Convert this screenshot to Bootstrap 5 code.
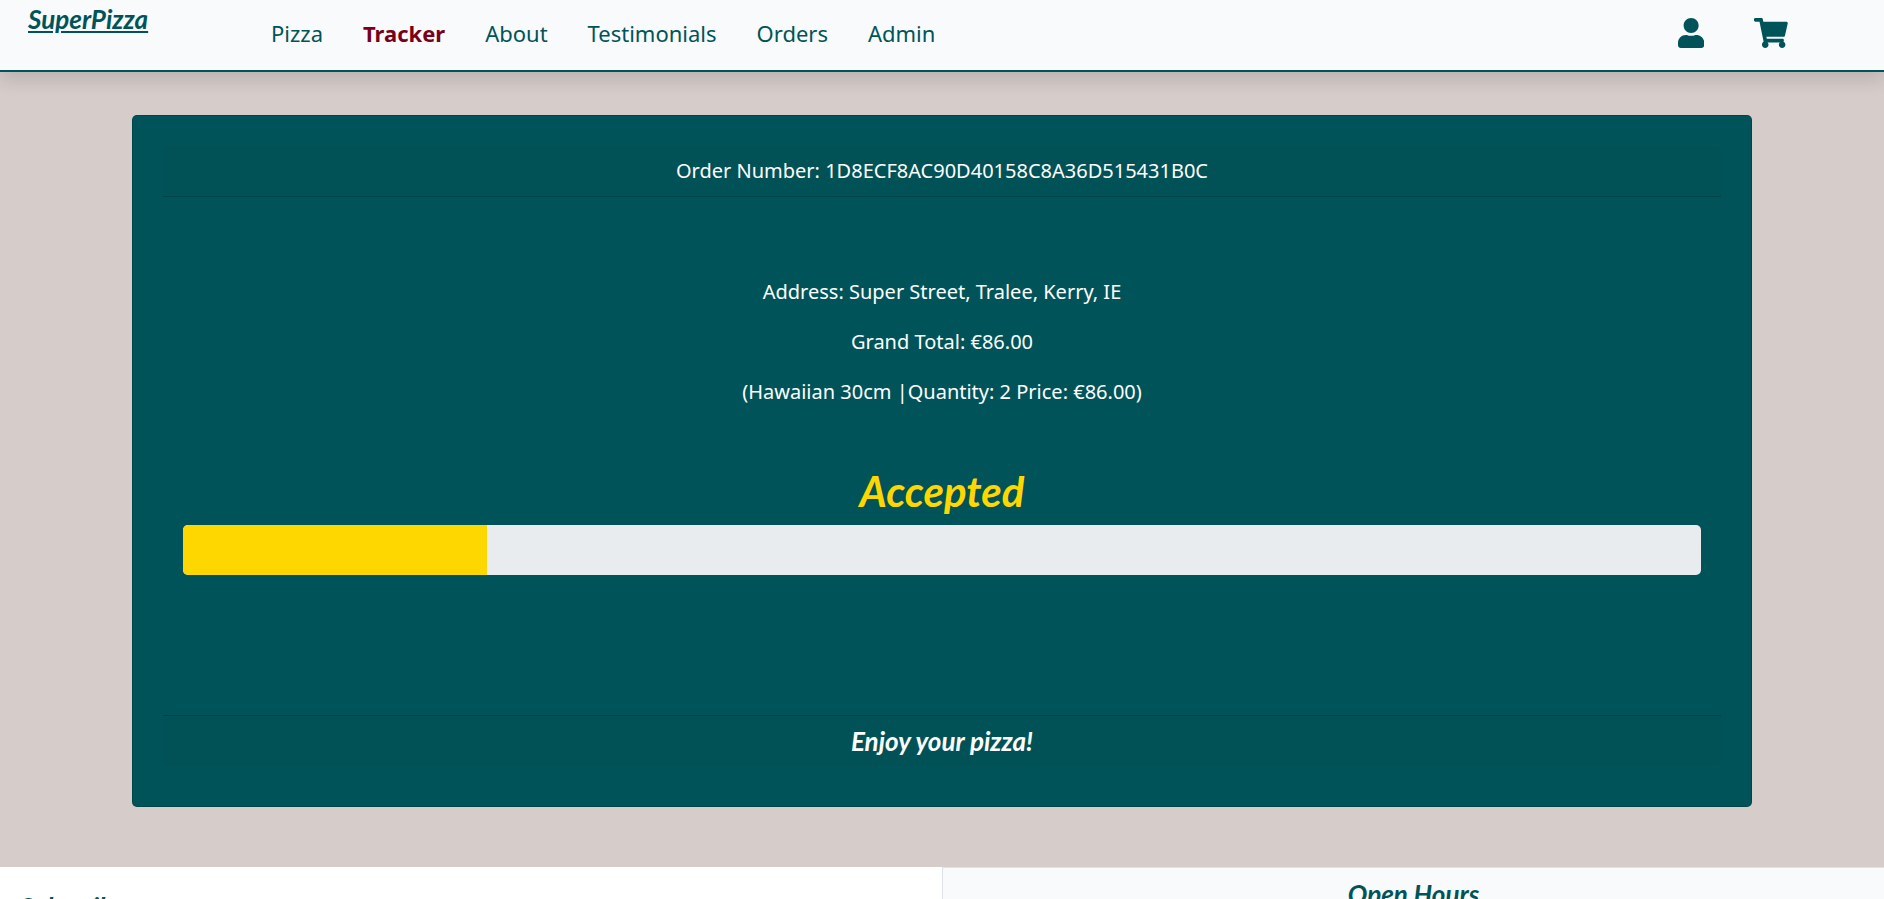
<!DOCTYPE html>
<html lang="en">
<head>
<meta charset="utf-8">
<meta name="viewport" content="width=device-width, initial-scale=1">
<title>SuperPizza - Tracker</title>
<link href="https://cdn.jsdelivr.net/npm/bootstrap@5.3.0/dist/css/bootstrap.min.css" rel="stylesheet">
<style>
  :root { --teal: #005459; --gold: #ffd700; --wine: #7a0019; }
  body { background: #d6ccca; color: var(--teal); font-family: "Noto Sans", sans-serif; font-size: 20px; }
  .display-font { font-family: Lato, sans-serif; font-style: italic; font-weight: 700; }
  .site-nav { background: #f8fafc; border-bottom: 2px solid var(--teal); height: 72px; padding: 0 96px 0 28px; }
  .site-nav a { color: var(--teal); }
  .brand { font-size: 26px; line-height: 38px; width: 243px; }
  .menu { gap: 40px; font-size: 22px; line-height: 32px; }
  .menu a { text-decoration: none; }
  .menu a.active { color: var(--wine); font-weight: 700; }
  .tools { gap: 50px; }
  .tools svg { display: block; height: 30px; fill: currentColor; }
  .tracker { background: var(--teal); width: 86%; margin: 43px auto 60px; padding: 30px 30px 40px; border-radius: 5px; }
  .tracker .card-header, .tracker .card-footer { padding: 10px 20px; line-height: 30px; }
  .tracker .card-body { padding: 80px 20px 140px; }
  .details p { line-height: 30px; margin-bottom: 20px; }
  .status { color: var(--gold); font-size: 42px; line-height: 48px; margin: 60px 0 10px; }
  .tracker .progress { height: 50px; border-radius: 5px; background: #e9ecef; }
  .tracker .progress-bar { background: var(--gold); }
  .closing { font-size: 26px; }
  .foot-title { font-size: 26px; line-height: 32px; margin: 0; }
  .foot-left { background: #fff; padding: 24px 20px; }
  .foot-right { background: #f8fafc; padding: 10px 20px 24px; }
</style>
</head>
<body>
<nav class="site-nav d-flex shadow position-relative">
  <a class="brand display-font align-self-start" href="#">SuperPizza</a>
  <div class="menu d-flex align-items-center pb-1">
    <a href="#">Pizza</a>
    <a href="#" class="active" aria-current="page">Tracker</a>
    <a href="#">About</a>
    <a href="#">Testimonials</a>
    <a href="#">Orders</a>
    <a href="#">Admin</a>
  </div>
  <div class="tools d-flex align-items-center ms-auto pb-1">
    <a href="#" aria-label="Account"><svg viewBox="0 0 448 512"><path d="M224 256c70.7 0 128-57.3 128-128S294.7 0 224 0 96 57.3 96 128s57.3 128 128 128zm89.6 32h-16.7c-22.2 10.2-46.9 16-72.9 16s-50.6-5.8-72.9-16h-16.7C60.2 288 0 348.2 0 422.4V464c0 26.5 21.5 48 48 48h352c26.5 0 48-21.5 48-48v-41.6c0-74.2-60.2-134.4-134.4-134.4z"/></svg></a>
    <a href="#" aria-label="Cart"><svg viewBox="0 0 576 512"><path d="M528.12 301.319l47.273-208C578.806 78.301 567.391 64 551.99 64H159.208l-9.166-44.81C147.758 8.021 137.93 0 126.529 0H24C10.745 0 0 10.745 0 24v16c0 13.255 10.745 24 24 24h69.883l70.248 343.435C147.325 417.1 136 435.222 136 456c0 30.928 25.072 56 56 56s56-25.072 56-56c0-15.674-6.447-29.835-16.824-40h209.647C430.447 426.165 424 440.326 424 456c0 30.928 25.072 56 56 56s56-25.072 56-56c0-22.172-12.888-41.332-31.579-50.405l5.517-24.276c3.413-15.018-8.002-29.319-23.403-29.319H218.117l-6.545-32h293.145c11.206 0 20.92-7.754 23.403-18.681z"/></svg></a>
  </div>
</nav>
<main class="card tracker text-center text-white">
  <div class="card-header">Order Number: 1D8ECF8AC90D40158C8A36D515431B0C</div>
  <div class="card-body">
    <div class="details">
      <p>Address: Super Street, Tralee, Kerry, IE</p>
      <p>Grand Total: €86.00</p>
      <p>(Hawaiian 30cm |Quantity: 2 Price: €86.00)</p>
    </div>
    <h1 class="status display-font">Accepted</h1>
    <div class="progress" role="progressbar" aria-label="Order progress" aria-valuenow="20" aria-valuemin="0" aria-valuemax="100">
      <div class="progress-bar" style="width: 20%"></div>
    </div>
  </div>
  <div class="card-footer closing display-font">Enjoy your pizza!</div>
</main>
<footer class="row g-0">
  <section class="col-6 foot-left"><h2 class="foot-title display-font">Subscribe</h2></section>
  <section class="col-6 foot-right border-start border-top text-center"><h2 class="foot-title display-font">Open Hours</h2></section>
</footer>
<script src="https://cdn.jsdelivr.net/npm/bootstrap@5.3.0/dist/js/bootstrap.bundle.min.js"></script>
</body>
</html>
